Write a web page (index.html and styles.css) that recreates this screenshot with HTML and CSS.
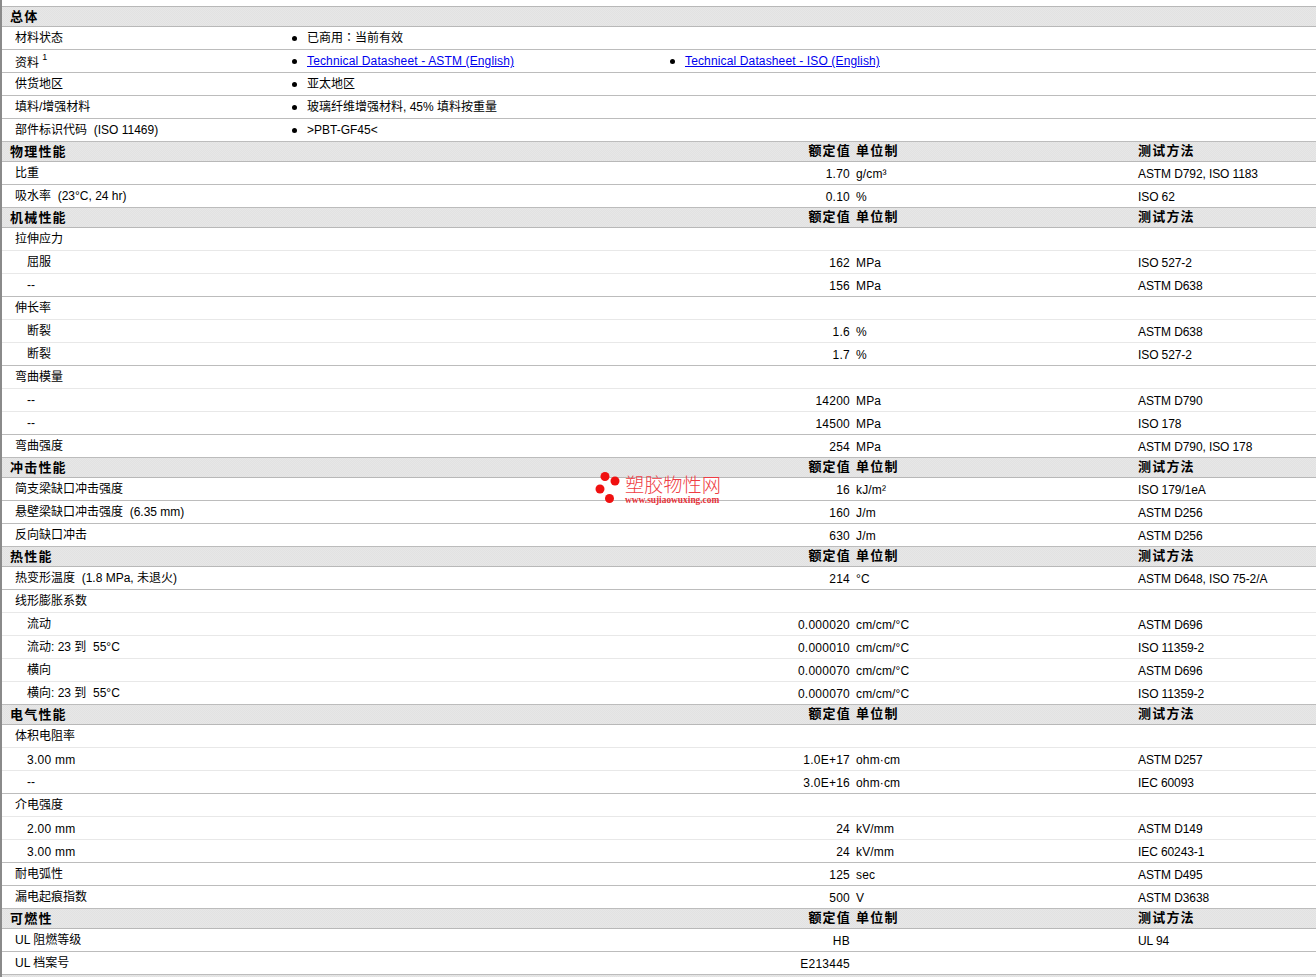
FILE: index.html
```html
<!DOCTYPE html>
<html lang="zh-CN">
<head>
<meta charset="utf-8">
<title>塑胶物性表</title>
<link rel="stylesheet" href="styles.css">
</head>
<body>
<main class="sheet">
  <section>
    <h2 class="head first"><span class="name">总体</span></h2>
    <div class="info"><span class="lbl">材料状态</span><ul class="bullets"><li><span>已商用<span class="colon" lang="zh-TW">：</span>当前有效</span></li></ul></div>
    <div class="info"><span class="lbl low">资料 <sup class="note">1</sup></span><ul class="bullets"><li><a href="#">Technical Datasheet - ASTM (English)</a></li><li><a href="#">Technical Datasheet - ISO (English)</a></li></ul></div>
    <div class="info"><span class="lbl">供货地区</span><ul class="bullets"><li>亚太地区</li></ul></div>
    <div class="info"><span class="lbl">填料/增强材料</span><ul class="bullets"><li>玻璃纤维增强材料, 45% 填料按重量</li></ul></div>
    <div class="info"><span class="lbl">部件标识代码&nbsp; (ISO 11469)</span><ul class="bullets"><li>&gt;PBT-GF45&lt;</li></ul></div>
  </section>

  <section>
    <h2 class="head"><span class="name">物理性能</span><span class="val">额定值</span><span class="unit">单位制</span><span class="meth">测试方法</span></h2>
    <div class="row"><span class="lbl">比重</span><span class="val">1.70</span><span class="unit">g/cm³</span><span class="meth">ASTM D792, ISO 1183</span></div>
    <div class="row"><span class="lbl">吸水率&nbsp; (23°C, 24 hr)</span><span class="val">0.10</span><span class="unit">%</span><span class="meth">ISO 62</span></div>
  </section>

  <section>
    <h2 class="head"><span class="name">机械性能</span><span class="val">额定值</span><span class="unit">单位制</span><span class="meth">测试方法</span></h2>
    <div class="row soft"><span class="lbl">拉伸应力</span></div>
    <div class="row soft"><span class="lbl sub">屈服</span><span class="val">162</span><span class="unit">MPa</span><span class="meth">ISO 527-2</span></div>
    <div class="row"><span class="lbl sub">--</span><span class="val">156</span><span class="unit">MPa</span><span class="meth">ASTM D638</span></div>
    <div class="row soft"><span class="lbl">伸长率</span></div>
    <div class="row soft"><span class="lbl sub">断裂</span><span class="val">1.6</span><span class="unit">%</span><span class="meth">ASTM D638</span></div>
    <div class="row"><span class="lbl sub">断裂</span><span class="val">1.7</span><span class="unit">%</span><span class="meth">ISO 527-2</span></div>
    <div class="row soft"><span class="lbl">弯曲模量</span></div>
    <div class="row soft"><span class="lbl sub">--</span><span class="val">14200</span><span class="unit">MPa</span><span class="meth">ASTM D790</span></div>
    <div class="row"><span class="lbl sub">--</span><span class="val">14500</span><span class="unit">MPa</span><span class="meth">ISO 178</span></div>
    <div class="row"><span class="lbl">弯曲强度</span><span class="val">254</span><span class="unit">MPa</span><span class="meth">ASTM D790, ISO 178</span></div>
  </section>

  <section>
    <h2 class="head"><span class="name">冲击性能</span><span class="val">额定值</span><span class="unit">单位制</span><span class="meth">测试方法</span></h2>
    <div class="row"><span class="lbl">简支梁缺口冲击强度</span><span class="val">16</span><span class="unit">kJ/m²</span><span class="meth">ISO 179/1eA</span></div>
    <div class="row"><span class="lbl">悬壁梁缺口冲击强度&nbsp; (6.35 mm)</span><span class="val">160</span><span class="unit">J/m</span><span class="meth">ASTM D256</span></div>
    <div class="row"><span class="lbl">反向缺口冲击</span><span class="val">630</span><span class="unit">J/m</span><span class="meth">ASTM D256</span></div>
  </section>

  <section>
    <h2 class="head"><span class="name">热性能</span><span class="val">额定值</span><span class="unit">单位制</span><span class="meth">测试方法</span></h2>
    <div class="row"><span class="lbl">热变形温度&nbsp; (1.8 MPa, 未退火)</span><span class="val">214</span><span class="unit">°C</span><span class="meth">ASTM D648, ISO 75-2/A</span></div>
    <div class="row soft"><span class="lbl">线形膨胀系数</span></div>
    <div class="row soft"><span class="lbl sub">流动</span><span class="val">0.000020</span><span class="unit">cm/cm/°C</span><span class="meth">ASTM D696</span></div>
    <div class="row soft"><span class="lbl sub">流动: 23 到&nbsp; 55°C</span><span class="val">0.000010</span><span class="unit">cm/cm/°C</span><span class="meth">ISO 11359-2</span></div>
    <div class="row soft"><span class="lbl sub">横向</span><span class="val">0.000070</span><span class="unit">cm/cm/°C</span><span class="meth">ASTM D696</span></div>
    <div class="row"><span class="lbl sub">横向: 23 到&nbsp; 55°C</span><span class="val">0.000070</span><span class="unit">cm/cm/°C</span><span class="meth">ISO 11359-2</span></div>
  </section>

  <section>
    <h2 class="head"><span class="name">电气性能</span><span class="val">额定值</span><span class="unit">单位制</span><span class="meth">测试方法</span></h2>
    <div class="row soft"><span class="lbl">体积电阻率</span></div>
    <div class="row soft"><span class="lbl sub num">3.00 mm</span><span class="val">1.0E+17</span><span class="unit">ohm·cm</span><span class="meth">ASTM D257</span></div>
    <div class="row"><span class="lbl sub">--</span><span class="val">3.0E+16</span><span class="unit">ohm·cm</span><span class="meth">IEC 60093</span></div>
    <div class="row soft"><span class="lbl">介电强度</span></div>
    <div class="row soft"><span class="lbl sub num">2.00 mm</span><span class="val">24</span><span class="unit">kV/mm</span><span class="meth">ASTM D149</span></div>
    <div class="row"><span class="lbl sub num">3.00 mm</span><span class="val">24</span><span class="unit">kV/mm</span><span class="meth">IEC 60243-1</span></div>
    <div class="row"><span class="lbl">耐电弧性</span><span class="val">125</span><span class="unit">sec</span><span class="meth">ASTM D495</span></div>
    <div class="row"><span class="lbl">漏电起痕指数</span><span class="val">500</span><span class="unit">V</span><span class="meth">ASTM D3638</span></div>
  </section>

  <section>
    <h2 class="head"><span class="name">可燃性</span><span class="val">额定值</span><span class="unit">单位制</span><span class="meth">测试方法</span></h2>
    <div class="row"><span class="lbl">UL 阻燃等级</span><span class="val">HB</span><span class="unit"></span><span class="meth">UL 94</span></div>
    <div class="row"><span class="lbl">UL 档案号</span><span class="val">E213445</span></div>
  </section>
  <div class="band"></div>

  <div class="mark" aria-label="塑胶物性网">
    <svg class="mark-dots" width="26" height="32" viewBox="0 0 26 32"><circle cx="10" cy="4.500" r="4.500"/><circle cx="20" cy="9" r="4.500"/><circle cx="5" cy="17" r="4.500"/><circle cx="14.500" cy="26.500" r="4.500"/></svg>
    <div class="mark-text"><span class="mark-cn">塑胶物性网</span><span class="mark-url">www.sujiaowuxing.com</span></div>
  </div>
</main>
</body>
</html>
```
FILE: styles.css
```css
* { box-sizing: border-box; }
html, body { margin: 0; padding: 0; background: #fff; }
body {
  font-family: "Liberation Sans", "Noto Sans CJK SC", sans-serif;
  font-size: 12px;
  color: #000;
  height: 977px;
  overflow: hidden;
}
.sheet {
  position: relative;
  padding-top: 6px;
  border-left: 2px solid #8a8a8a;
  height: 977px;
}
.head, .row {
  display: grid;
  grid-template-columns: 698px 150px 288px 1fr;
  align-items: center;
}
.head {
  margin: 0;
  height: 20px;
  font-size: 13px;
  font-weight: 700;
  line-height: 17px;
  letter-spacing: 1.200px;
  padding-bottom: 2px;
  border-bottom: 1px solid #b8b8b8;
  background-color: #e4e4e4;
  background-image: repeating-conic-gradient(#e2e2e2 0 25%, #e7e7e7 0 50%);
  background-size: 2px 2px;
}
.head .val { margin-right: -1px; }
.head.first { height: 21px; border-top: 1px solid #b8b8b8; }
.name { padding-left: 8px; position: relative; top: 1px; }
.row, .info {
  height: 23px;
  line-height: 22px;
  border-bottom: 1px solid #bcbcbc;
}
.row.soft { border-bottom-color: #e8e8e8; }
.info {
  display: grid;
  grid-template-columns: 290px 1fr;
  align-items: center;
  align-content: start;
}
.lbl { padding-left: 13px; }
.lbl.sub { padding-left: 25px; }
.lbl.num { position: relative; top: 1px; letter-spacing: .25px; }
.lbl.low { position: relative; top: 2px; }
.val { text-align: right; }
.unit { padding-left: 6px; }
.row .val { letter-spacing: .25px; }
.row .unit { letter-spacing: .15px; }
.row .meth { letter-spacing: -.1px; }
.row .val, .row .unit, .row .meth { position: relative; top: 1px; }
.note { font-size: 9px; line-height: 0; vertical-align: 7px; }
.colon { font-family: "Noto Sans CJK TC", sans-serif; line-height: 1; }
.bullets {
  margin: 0;
  padding: 0;
  list-style: none;
  display: grid;
  grid-template-columns: 378px 1fr;
}
.bullets li { display: flex; align-items: center; }
.bullets li::before {
  content: "";
  flex: none;
  width: 5px;
  height: 5px;
  margin-right: 10px;
  border-radius: 50%;
  background: #000;
}
a { color: #0000ee; text-decoration: underline; letter-spacing: .14px; }
.band {
  height: 3px;
  background-color: #e4e4e4;
  background-image: repeating-conic-gradient(#e2e2e2 0 25%, #e7e7e7 0 50%);
  background-size: 2px 2px;
}
.mark {
  position: absolute;
  left: 593px;
  top: 472px;
  display: flex;
  gap: 4px;
  align-items: flex-start;
}
.mark-dots { fill: #f01010; display: block; }
.mark-text { display: flex; flex-direction: column; padding-top: 4px; }
.mark-cn {
  font-size: 19.200px;
  line-height: 20px;
  font-weight: 300;
  color: #ee3d44;
  white-space: nowrap;
}
.mark-url {
  font-family: "Liberation Serif", serif;
  font-size: 9.400px;
  font-weight: 700;
  line-height: 9px;
  color: #e5333a;
  white-space: nowrap;
}
```
